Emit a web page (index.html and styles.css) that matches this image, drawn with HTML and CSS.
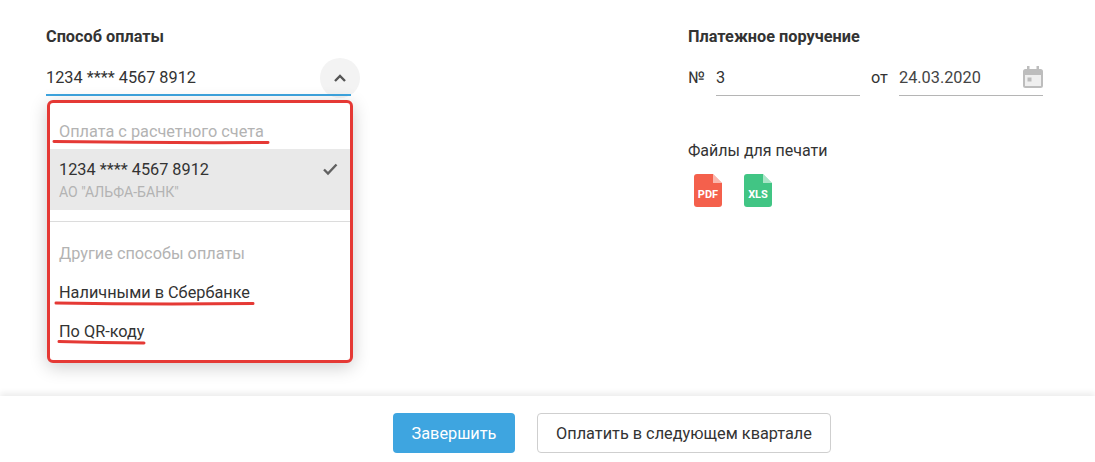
FILE: index.html
```html
<!DOCTYPE html>
<html lang="ru">
<head>
<meta charset="utf-8">
<title>Оплата</title>
<link rel="stylesheet" href="styles.css">
</head>
<body>
<div class="page">
  <main class="main">
    <section class="col-left">
      <h2 class="title">Способ оплаты</h2>
      <div class="select">
        <span class="select-value">1234 **** 4567 8912</span>
        <span class="select-toggle">
          <svg width="14" height="10" viewBox="0 0 14 10"><path d="M2 8 L7 3 L12 8" fill="none" stroke="#555" stroke-width="2.4"/></svg>
        </span>
      </div>
      <div class="menu">
        <div class="menu-heading menu-heading-first">Оплата с расчетного счета</div>
        <div class="menu-selected">
          <div class="menu-selected-text">
            <div class="menu-main">1234 **** 4567 8912</div>
            <div class="menu-sub">АО "АЛЬФА-БАНК"</div>
          </div>
          <svg class="check" width="16" height="14" viewBox="0 0 16 14"><path d="M2 7.500 L6 11.500 L14.500 2.500" fill="none" stroke="#616161" stroke-width="2.400"/></svg>
        </div>
        <div class="menu-divider"></div>
        <div class="menu-heading">Другие способы оплаты</div>
        <div class="menu-item">Наличными в Сбербанке</div>
        <div class="menu-item">По QR-коду</div>
      </div>
    </section>
    <section class="col-right">
      <h2 class="title">Платежное поручение</h2>
      <div class="order-row">
        <span class="order-label">№</span>
        <div class="field field-num">3</div>
        <span class="order-from">от</span>
        <div class="field field-date">
          <span>24.03.2020</span>
          <svg class="cal" width="20" height="22" viewBox="0 0 20 22">
            <path fill="#bdbdbd" d="M4 0h2.500v3h7V0H16v3h1.500A2.500 2.500 0 0 1 20 5.500v14A2.500 2.500 0 0 1 17.500 22h-15A2.500 2.500 0 0 1 0 19.500v-14A2.500 2.500 0 0 1 2.500 3H4z"/>
            <rect x="2" y="9" width="16" height="11" fill="#efefef"/>
            <rect x="4.500" y="11.500" width="4" height="4" fill="#bdbdbd"/>
          </svg>
        </div>
      </div>
      <div class="files-label">Файлы для печати</div>
      <div class="files">
        <div class="file file-pdf"><i class="file-fold"></i><span>PDF</span></div>
        <div class="file file-xls"><i class="file-fold"></i><span>XLS</span></div>
      </div>
    </section>
  </main>
  <footer class="footer">
    <button class="btn btn-primary">Завершить</button>
    <button class="btn btn-secondary">Оплатить в следующем квартале</button>
  </footer>
  <svg class="marks" width="1095" height="462" viewBox="0 0 1095 462">
    <path d="M54 141.500 Q160 143 268 142.500" />
    <path d="M56 303 Q150 304.500 253 303.500" />
    <path d="M59 341.500 Q100 342.500 144 343" />
  </svg>
</div>
</body>
</html>
```

FILE: styles.css
```css
* { box-sizing: border-box; }
html, body { margin: 0; padding: 0; }
body {
  font-family: Roboto, "Liberation Sans", sans-serif;
  color: #333;
  background: #fff;
  overflow: hidden;
}
.page {
  position: relative;
  width: 1095px;
  height: 462px;
  display: flex;
  flex-direction: column;
}
.main {
  height: 396px;
  display: flex;
  padding: 28px 0 0 46px;
}
.col-left {
  position: relative;
  width: 306px;
  margin-right: 336px;
}
.col-right { width: 355px; }
.title {
  margin: 0;
  font-size: 16.3px;
  line-height: 18px;
  font-weight: 700;
  color: #333;
}
.select {
  position: relative;
  margin-top: 10px;
  height: 40px;
  width: 305px;
  border-bottom: 2px solid #3ea5e0;
  font-size: 16.3px;
  line-height: 20px;
  padding-top: 12px;
}
.select-value { display: block; }
.select-toggle {
  position: absolute;
  z-index: -1;
  left: 274px;
  top: 2px;
  width: 40px;
  height: 40px;
  border-radius: 50%;
  background: #f3f3f3;
  display: flex;
  align-items: center;
  justify-content: center;
}
.menu {
  position: absolute;
  left: 1px;
  top: 72px;
  width: 306px;
  height: 263px;
  background: #fff;
  border: 3px solid #e53935;
  border-radius: 6px;
  padding-top: 9px;
  box-shadow: 0 4px 18px rgba(0, 0, 0, .2);
}
.menu-heading {
  height: 38px;
  padding-left: 9px;
  font-size: 16.3px;
  line-height: 38px;
  color: #b3b3b3;
}
.menu-heading-first { line-height: 40px; }
.menu-selected {
  height: 61px;
  margin-top: -1px;
  padding: 11px 12px 0 9px;
  background: #e9e9e9;
  display: flex;
  justify-content: space-between;
}
.menu-main { font-size: 16.3px; line-height: 20px; }
.menu-sub {
  margin-top: 4px;
  font-size: 14.1px;
  line-height: 16px;
  color: #b3b3b3;
}
.check { margin-top: 2px; }
.menu-divider {
  height: 1px;
  margin: 11px 0 13px;
  background: #dcdcdc;
}
.menu-item {
  height: 39px;
  padding-left: 9px;
  font-size: 16.3px;
  line-height: 40px;
}
.order-row {
  margin-top: 10px;
  display: flex;
  align-items: flex-start;
  height: 40px;
  font-size: 16.3px;
  line-height: 20px;
}
.order-label { width: 28px; padding-top: 12px; }
.order-from { width: 39px; padding: 12px 0 0 11px; }
.field {
  height: 40px;
  padding-top: 12px;
  border-bottom: 1px solid #b5b5b5;
}
.field-num { width: 144px; }
.field-date {
  width: 144px;
  display: flex;
  justify-content: space-between;
  color: #444;
}
.cal { margin: -2px 0 0 0; }
.files-label {
  margin-top: 45px;
  font-size: 16px;
  line-height: 20px;
}
.files {
  margin-top: 13px;
  padding-left: 6px;
  display: flex;
  gap: 22px;
}
.file {
  position: relative;
  width: 28px;
  height: 33px;
  border-radius: 3px;
  display: flex;
  align-items: flex-end;
  justify-content: center;
  padding-bottom: 6px;
  color: #fff;
  font-size: 11px;
  line-height: 12px;
  font-weight: 700;
  clip-path: polygon(0 0, 19px 0, 28px 9px, 28px 33px, 0 33px);
}
.file-pdf { background: #f4604c; }
.file-xls { background: #41c584; }
.file-fold {
  position: absolute;
  right: 0;
  top: 0;
  width: 9px;
  height: 9px;
  background: rgba(255, 255, 255, .55);
}
.footer {
  flex: 1;
  display: flex;
  align-items: flex-start;
  gap: 22px;
  padding: 17px 0 0 393px;
  box-shadow: 0 -3px 6px rgba(0, 0, 0, .08);
  background: #fff;
}
.btn {
  height: 40px;
  border-radius: 4px;
  font-family: inherit;
  font-size: 16.3px;
  padding: 0;
}
.btn-primary {
  width: 122px;
  border: 0;
  background: #3ea5e0;
  color: #fff;
}
.btn-secondary {
  width: 294px;
  background: #fff;
  border: 1px solid #cfcfcf;
  color: #333;
}
.marks {
  position: absolute;
  left: 0;
  top: 0;
  pointer-events: none;
}
.marks path {
  fill: none;
  stroke: #e53935;
  stroke-width: 3;
  stroke-linecap: round;
}
```
